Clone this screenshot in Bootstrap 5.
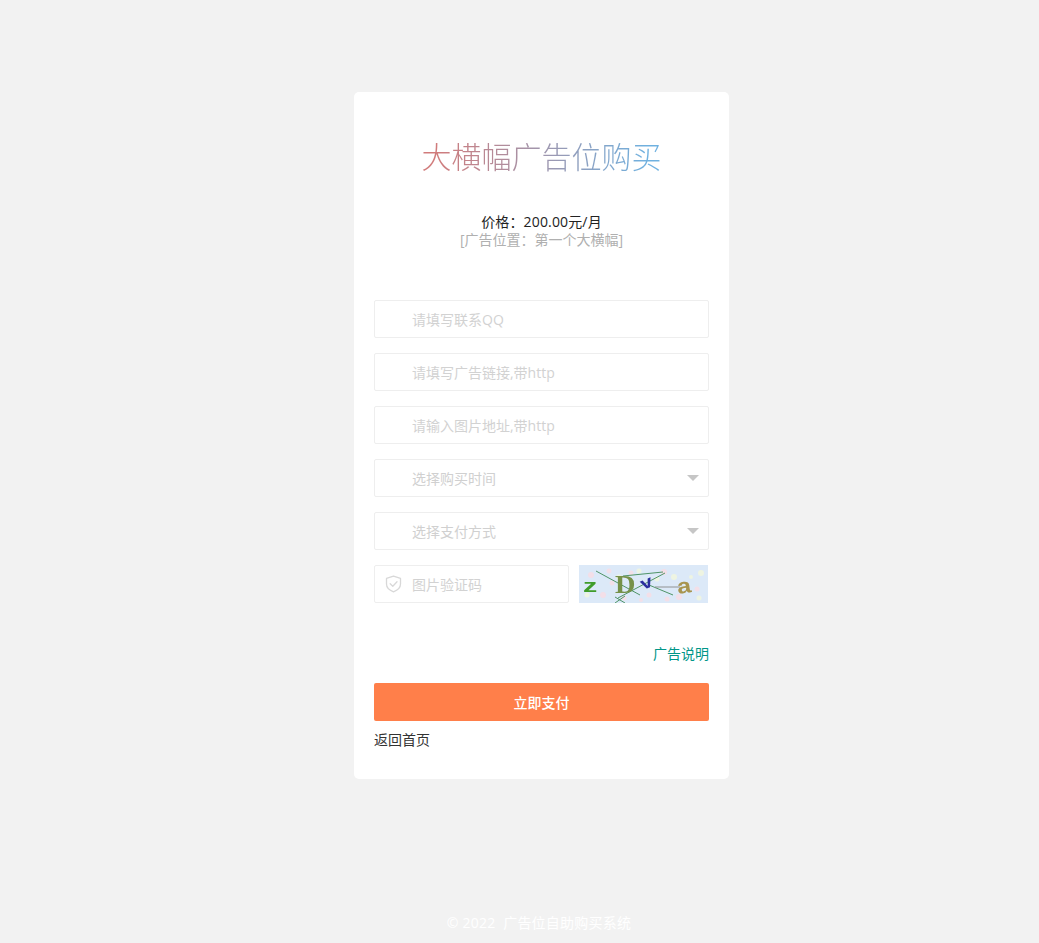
<!DOCTYPE html>
<html lang="zh-CN">
<head>
<meta charset="utf-8">
<title>大横幅广告位购买</title>
<link rel="stylesheet" href="https://cdn.jsdelivr.net/npm/bootstrap@5.3.0/dist/css/bootstrap.min.css">
<style>
body{background:#f2f2f2;font-family:"Open Sans","Noto Sans CJK SC",sans-serif;font-size:14px;color:#333;line-height:18px}
.page-wrap{padding-top:92px;padding-left:354px}
.buy-card{width:375px;height:687px;border-radius:5px;padding:0 20px}
.buy-title{font-size:30px;line-height:40px;font-weight:300;margin:0;padding-top:45px;background:linear-gradient(90deg,#d17b7b 18%,#6fb1e0 82%);-webkit-background-clip:text;background-clip:text;color:transparent}
.buy-price{margin-top:36px;color:#222;letter-spacing:.15px}
.buy-note{color:#b0b0b0}
.buy-form{margin-top:51px}
.field{position:relative;height:38px;margin-bottom:15px}
.field .form-control,.field .form-select{height:38px;border:1px solid #eeeeee;border-radius:2px;padding:0 30px 0 37px;font-size:14px;line-height:36px;color:#d0d0d0;background-image:none;box-shadow:none}
.field .form-select{padding-top:1px}
.field .form-control::placeholder{color:#d2d2d2;opacity:1}
.select-arrow{position:absolute;right:10px;top:16px;width:0;height:0;border:6px solid transparent;border-top:6px solid #c6c6c6;border-bottom:0;pointer-events:none}
.field-icon{position:absolute;left:11px;top:10px;width:17px;height:18px}
.code-field{width:195px;flex:none}
.captcha-img{display:block;width:129px;height:38px;flex:none;margin-left:10px}
.ad-info{margin-top:27px;color:#009688;text-decoration:none}
.ad-info:hover{color:#009688}
.pay-btn{height:38px;margin-top:20px;background:#ff7f4a;border:0;border-radius:2px;color:#fff;font-size:14px;font-weight:500;line-height:38px;padding:1px 0 0}
.pay-btn:hover{background:#ff7f4a;color:#fff}
.back-link{margin-top:10px;color:#333;text-decoration:none}
.foot-note{margin-top:135px;padding-left:39px;padding-bottom:11px;color:#fff;line-height:18px;letter-spacing:.22px}
</style>
</head>
<body>
<div class="page-wrap">
  <div class="buy-card bg-white">
    <h1 class="buy-title text-center">大横幅广告位购买</h1>
    <div class="buy-price text-center">价格：200.00元/月</div>
    <div class="buy-note text-center">[广告位置：第一个大横幅]</div>
    <form class="buy-form">
      <div class="field"><input class="form-control" type="text" placeholder="请填写联系QQ"></div>
      <div class="field"><input class="form-control" type="text" placeholder="请填写广告链接,带http"></div>
      <div class="field"><input class="form-control" type="text" placeholder="请输入图片地址,带http"></div>
      <div class="field"><select class="form-select"><option>选择购买时间</option></select><span class="select-arrow"></span></div>
      <div class="field"><select class="form-select"><option>选择支付方式</option></select><span class="select-arrow"></span></div>
      <div class="d-flex">
        <div class="field code-field">
          <svg class="field-icon" viewBox="0 0 17 18" fill="none" stroke="#d8d8d8" stroke-width="1.3" stroke-linejoin="round" stroke-linecap="round"><path d="M8.500 1.200 15.500 3.400V9c0 3.700-3.200 6.400-7 7.800C4.700 15.400 1.500 12.700 1.500 9V3.400Z"/><path d="M5.200 8.700 7.800 11.200 12 6.700"/></svg>
          <input class="form-control" type="text" placeholder="图片验证码">
        </div>
        <svg class="captcha-img" viewBox="0 0 129 38" role="img" aria-label="验证码">
          <defs><filter id="soft" x="-5%" y="-5%" width="110%" height="110%"><feGaussianBlur stdDeviation=".35"/></filter></defs>
          <rect width="129" height="38" fill="#dce9f8"/>
          <g filter="url(#soft)">
            <g fill="#f3dfe8"><circle cx="12" cy="10" r="3"/><circle cx="30" cy="6" r="2.500"/><circle cx="24" cy="30" r="3"/><circle cx="45" cy="33" r="2.500"/><circle cx="85" cy="7" r="3"/><circle cx="70" cy="30" r="2.500"/><circle cx="100" cy="32" r="3"/><circle cx="118" cy="24" r="2.500"/><circle cx="52" cy="8" r="2.500"/><circle cx="88" cy="34" r="2.500"/><circle cx="33" cy="18" r="2.500"/><circle cx="62" cy="35" r="2"/></g>
            <g fill="#eef4e2"><circle cx="40" cy="12" r="2.500"/><circle cx="95" cy="12" r="3"/><circle cx="122" cy="8" r="3"/><circle cx="60" cy="6" r="2.500"/><circle cx="112" cy="12" r="2"/><circle cx="8" cy="30" r="2.500"/><circle cx="78" cy="14" r="2.500"/><circle cx="120" cy="33" r="2.500"/><circle cx="106" cy="22" r="2"/></g>
            <g stroke="#3f8a57" stroke-width=".9"><path d="M17 6 61 30"/><path d="M39 33 86 8"/><path d="M44 11 84 7"/><path d="M70 20 94 30"/><path d="M36 38 46 31"/><path d="M36 32 46 38"/></g>
            <path d="M76 22H101" stroke="#888" stroke-width=".9"/>
            <g font-family="Liberation Sans,sans-serif" font-weight="700">
              <text x="0" y="0" font-size="19" fill="#3f9c2b" transform="translate(4 27) scale(1.5 .95)">z</text>
              <text x="0" y="0" font-family="Liberation Serif,serif" font-size="27" fill="#76914a" transform="translate(36 28) scale(1.05 .95)">D</text>
              <text x="0" y="0" font-size="17" fill="#2a2f9e" transform="translate(64 25) rotate(-22) scale(1.25 1)">v</text>
              <text x="0" y="0" font-size="21" fill="#a89550" transform="translate(99 29) rotate(-8) scale(1.2 1)">a</text>
            </g>
          </g>
        </svg>
      </div>
      <div class="text-end"><a class="ad-info d-inline-block" href="#">广告说明</a></div>
      <button type="button" class="btn pay-btn d-block w-100">立即支付</button>
      <div class="back-link"><a class="text-decoration-none back-link" href="#">返回首页</a></div>
    </form>
  </div>
  </div>
<div class="foot-note text-center">© 2022&nbsp;&nbsp;广告位自助购买系统</div>
<script src="https://cdn.jsdelivr.net/npm/bootstrap@5.3.0/dist/js/bootstrap.bundle.min.js"></script>
</body>
</html>
